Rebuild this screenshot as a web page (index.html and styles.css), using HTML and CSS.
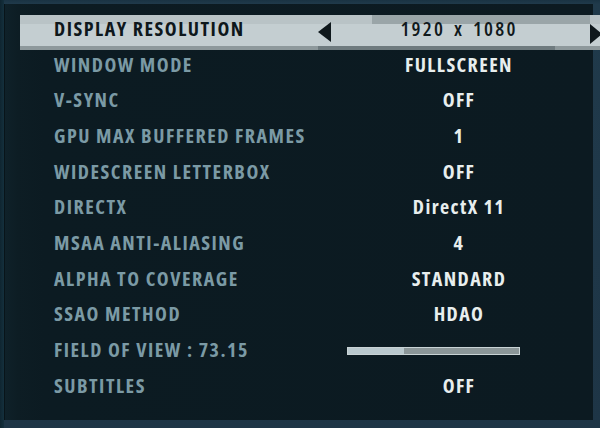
FILE: index.html
```html
<!DOCTYPE html>
<html>
<head>
<meta charset="utf-8">
<link rel="stylesheet" href="styles.css">
</head>
<body>
<div class="screen">
  <div class="panel">
    <ul class="options">
      <li class="row active">
        <span class="label">DISPLAY RESOLUTION</span>
        <span class="value">
          <span class="arrow left"></span>
          1920 x 1080
          <span class="arrow right"></span>
        </span>
      </li>
      <li class="row"><span class="label">WINDOW MODE</span><span class="value">FULLSCREEN</span></li>
      <li class="row"><span class="label">V-SYNC</span><span class="value">OFF</span></li>
      <li class="row"><span class="label">GPU MAX BUFFERED FRAMES</span><span class="value">1</span></li>
      <li class="row"><span class="label">WIDESCREEN LETTERBOX</span><span class="value">OFF</span></li>
      <li class="row"><span class="label">DIRECTX</span><span class="value">DirectX 11</span></li>
      <li class="row"><span class="label">MSAA ANTI-ALIASING</span><span class="value">4</span></li>
      <li class="row"><span class="label">ALPHA TO COVERAGE</span><span class="value">STANDARD</span></li>
      <li class="row"><span class="label">SSAO METHOD</span><span class="value">HDAO</span></li>
      <li class="row"><span class="label">FIELD OF VIEW : 73.15</span><span class="value slot"><span class="slider"><span class="fill" style="width:33%"></span></span></span></li>
      <li class="row"><span class="label">SUBTITLES</span><span class="value">OFF</span></li>
    </ul>
  </div>
</div>
</body>
</html>
```
FILE: styles.css
```css
html, body {
  margin: 0;
  padding: 0;
}
body {
  width: 600px;
  height: 428px;
  overflow: hidden;
  background: #1c3444;
  font-family: "Open Sans", "DejaVu Sans Condensed", sans-serif;
  font-stretch: 75%;
  font-weight: bold;
}
.screen {
  width: 600px;
  height: 428px;
  padding: 4px 7px 8px 4px;
  box-sizing: border-box;
  background:
    linear-gradient(90deg, #0f2530 0, #14303d 4px, transparent 4px),
    linear-gradient(180deg, #1a3343 0, #203a4b 4px, #1e3546 100%);
}
.panel {
  height: 416px;
  background:
    linear-gradient(90deg, #081419 0, #081419 1px, #0f2129 1px, #0d1d24 14px, #0c1b22 40px, #0c1a21 100%);
  padding-top: 11px;
  box-sizing: border-box;
}
.options {
  list-style: none;
  margin: 0 -7px 0 16px;
  padding: 0;
}
.row {
  height: 35.7px;
  display: flex;
  align-items: center;
  font-size: 20px;
  line-height: 1;
  padding-bottom: 8px;
  box-sizing: border-box;
}
.label {
  width: 264px;
  padding-left: 34px;
  color: #7b9aa5;
  white-space: nowrap;
  letter-spacing: 1.5px;
}
.value {
  flex: 1;
  position: relative;
  display: flex;
  justify-content: center;
  align-items: center;
  color: #e8eeee;
  align-self: stretch;
  margin-bottom: -8px;
  padding-bottom: 8px;
  letter-spacing: 1.4px;
}
.row.active {
  height: 35px;
  margin-bottom: 0.7px;
  background:
    linear-gradient(180deg, transparent 0, transparent 31px, #8e999c 31px),
    linear-gradient(180deg, #b9c3c6 0, #b9c3c6 9px, #c4ced1 9px);
}
.row.active .label {
  color: #0e171b;
}
.row.active .value {
  color: #10191c;
  font-weight: 600;
  word-spacing: 3px;
  letter-spacing: 2.2px;
  background:
    linear-gradient(90deg, transparent 0, transparent 54px, #9aa5a8 54px, #9aa5a8 272px, transparent 272px) top / 100% 9px no-repeat,
    linear-gradient(90deg, #6f7b7f 0, #6f7b7f 237px, #8e999c 237px, #8e999c 272px, transparent 272px) bottom / 100% 4px no-repeat;
}
.arrow {
  position: absolute;
  top: 7px;
  width: 0;
  height: 0;
  border-top: 10.5px solid transparent;
  border-bottom: 10.5px solid transparent;
}
.arrow.left {
  left: 0;
  border-right: 13px solid #0f181c;
}
.arrow.right {
  right: -2px;
  top: 9px;
  border-left: 12px solid #0f181c;
}
.value.slot {
  justify-content: flex-start;
  padding-left: 29px;
}
.slider {
  display: block;
  width: 171px;
  height: 6px;
  margin-top: 1px;
  background: #8b9698;
  border: 1px solid #c9d3d5;
}
.fill {
  display: block;
  height: 100%;
  background: #b9c8cd;
}
```
